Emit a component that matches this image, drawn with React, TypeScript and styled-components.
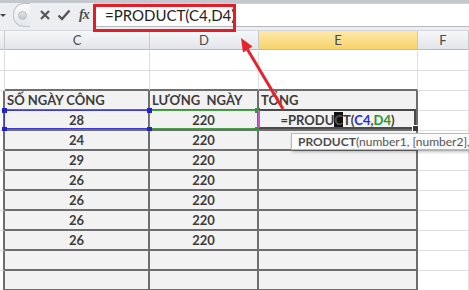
import React from "react";
import styled, { createGlobalStyle } from "styled-components";

const GlobalStyle = createGlobalStyle`
  html, body {
    margin: 0;
    padding: 0;
    background: #fff;
  }
  body {
    overflow: hidden;
    font-family: Lato, "Liberation Sans", sans-serif;
  }
`;

const Screen = styled.div`
  position: relative;
  width: 469px;
  height: 290px;
  overflow: hidden;
  background: #fff;
`;

/* formula bar */

const FormulaBar = styled.div`
  display: flex;
  height: 31px;
  box-sizing: border-box;
  border-top: 3px solid #c4c8ce;
  padding-bottom: 3px;
  background: #eceef1;
  border-bottom: 1px solid #d3d6da;
`;

const Tools = styled.div`
  width: 95px;
  display: flex;
  align-items: center;
  flex-shrink: 0;
`;

const Caret = styled.div`
  width: 0;
  height: 0;
  margin-left: 0;
  border-left: 3px solid transparent;
  border-right: 3px solid transparent;
  border-top: 3px solid #444;
  margin-right: 7px;
`;

const Pill = styled.div`
  width: 16px;
  height: 22px;
  border-radius: 11px 0 0 11px;
  border: 1px solid #c2c6cc;
  border-right: none;
  background: linear-gradient(#fbfbfc, #e4e7eb);
  display: flex;
  align-items: center;
  justify-content: center;
  margin-right: 8px;
`;

const Dot = styled.div`
  width: 7px;
  height: 7px;
  border-radius: 50%;
  background: linear-gradient(#e3e5e8, #c3c6cb);
  border: 1px solid #b8bcc1;
`;

const ToolIcon = styled.svg`
  width: 14px;
  height: 14px;
  margin-right: 5px;
  flex-shrink: 0;
`;

const Fx = styled.span`
  font-family: "Liberation Serif", serif;
  font-style: italic;
  font-weight: bold;
  font-size: 14px;
  color: #4d4d4d;
  margin-left: 3px;
  letter-spacing: -1px;
`;

const FormulaInput = styled.div`
  flex: 1;
  background: #fff;
  border-top: 1px solid #cfd3d8;
  border-bottom: 1px solid #b5bac1;
  display: flex;
  align-items: center;
  padding-left: 10px;
  font-size: 15px;
  color: #222;
`;

/* grid */

const Sheet = styled.div`
  display: grid;
  grid-template-columns: 5px 145px 109px 159px 1fr;
  grid-auto-rows: 20px;
`;

const ColumnHead = styled.div<{ $selected?: boolean }>`
  height: 19px;
  box-sizing: border-box;
  border-right: 1px solid #c6cacf;
  border-bottom: 1px solid #b8bcc2;
  background: ${({ $selected }) =>
    $selected
      ? "linear-gradient(#fde9ab, #f8d36b)"
      : "linear-gradient(#f6f7f9, #e2e5e9)"};
  display: flex;
  align-items: center;
  justify-content: center;
  font-size: 13px;
  color: #4a4a4a;
`;

type Tone = "plain" | "table" | "edge" | "tableEdge";

const Cell = styled.div<{ $tone: Tone; $align?: string; $topDark?: boolean }>`
  position: relative;
  box-sizing: border-box;
  display: flex;
  align-items: center;
  justify-content: ${({ $align }) => $align || "center"};
  padding-left: ${({ $align }) => ($align === "flex-start" ? "2px" : "0")};
  white-space: nowrap;
  font-size: 13px;
  font-weight: 700;
  color: #3c3c3c;
  background: ${({ $tone }) =>
    $tone === "table" ? "#f2f2f2" : "#fff"};
  border-bottom: ${({ $tone }) =>
    $tone === "table" ? "2px solid #6e6e6e" : "1px solid #dcdee0"};
  border-right: ${({ $tone }) =>
    $tone === "table" || $tone === "tableEdge"
      ? "2px solid #6e6e6e"
      : "1px solid #dcdee0"};
  ${({ $topDark }) => ($topDark ? "border-bottom: 2px solid #6e6e6e;" : "")}
`;

const Ring = styled.div<{ $color: string }>`
  position: absolute;
  inset: -1px -2px 0 -1px;
  border: 1px solid ${({ $color }) => $color};
  pointer-events: none;
`;

const Handle = styled.div<{ $color: string; $x: "l" | "r"; $y: "t" | "b" }>`
  position: absolute;
  width: 5px;
  height: 5px;
  background: ${({ $color }) => $color};
  ${({ $x }) => ($x === "l" ? "left: -3px;" : "right: -3px;")}
  ${({ $y }) => ($y === "t" ? "top: -3px;" : "bottom: -3px;")}
`;

const ActiveFrame = styled.div`
  position: absolute;
  inset: -2px 0 0 -1px;
  border: 2px solid #4a4a4a;
  border-left: 2px solid #c05ac8;
  pointer-events: none;
`;

const FillHandle = styled.div`
  position: absolute;
  right: -3px;
  bottom: -3px;
  width: 5px;
  height: 5px;
  background: #3a3a3a;
  border: 1px solid #fff;
`;

const RefC = styled.span`
  color: #2a2ad4;
`;

const RefD = styled.span`
  color: #2b9430;
`;

const Cursor = styled.span`
  background: #111;
  color: #555;
  display: inline-block;
  line-height: 17px;
`;

const Tooltip = styled.div`
  position: absolute;
  left: 291px;
  top: 133px;
  height: 17px;
  padding: 0 6px;
  box-sizing: border-box;
  background: #fbfbfb;
  border: 1px solid #b9b9b9;
  box-shadow: 1px 2px 3px rgba(0, 0, 0, 0.25);
  display: flex;
  align-items: center;
  white-space: nowrap;
  font-size: 12px;
  color: #555;
  b {
    font-weight: 700;
    color: #4d4d4d;
  }
`;

const RedBox = styled.div`
  position: absolute;
  left: 93px;
  top: 4px;
  width: 143px;
  height: 28px;
  box-sizing: border-box;
  border: 3px solid #e11d25;
  pointer-events: none;
`;

const Arrow = styled.svg`
  position: absolute;
  left: 0;
  top: 0;
  pointer-events: none;
`;

type Row =
  | { kind: "blank" }
  | { kind: "head" }
  | { kind: "data"; c?: string; d?: string; active?: boolean };

const rows: Row[] = [
  { kind: "blank" },
  { kind: "blank" },
  { kind: "head" },
  { kind: "data", c: "28", d: "220", active: true },
  { kind: "data", c: "24", d: "220" },
  { kind: "data", c: "29", d: "220" },
  { kind: "data", c: "26", d: "220" },
  { kind: "data", c: "26", d: "220" },
  { kind: "data", c: "26", d: "220" },
  { kind: "data", c: "26", d: "220" },
  { kind: "data" },
  { kind: "data" },
];

const Formula = () => (
  <>
    =PRODU<Cursor>C</Cursor>T(<RefC>C4</RefC>,<RefD>D4</RefD>)
  </>
);

const App = () => {
  return (
    <>
      <GlobalStyle />
      <Screen>
        <FormulaBar>
          <Tools>
            <Caret />
            <Pill>
              <Dot />
            </Pill>
            <ToolIcon viewBox="0 0 14 14">
              <path d="M3 3 L11 11 M11 3 L3 11" stroke="#555" strokeWidth="2.2" />
            </ToolIcon>
            <ToolIcon viewBox="0 0 14 14">
              <path d="M1.5 7.5 L5 11 L12.5 2.5" stroke="#555" strokeWidth="2.4" fill="none" />
            </ToolIcon>
            <Fx>fx</Fx>
          </Tools>
          <FormulaInput>=PRODUCT(C4,D4)</FormulaInput>
        </FormulaBar>

        <Sheet>
          <ColumnHead />
          <ColumnHead>C</ColumnHead>
          <ColumnHead>D</ColumnHead>
          <ColumnHead $selected>E</ColumnHead>
          <ColumnHead>F</ColumnHead>

          {rows.map((row, i) => {
            const before = rows[i + 1]?.kind === "head";
            if (row.kind === "blank") {
              return (
                <React.Fragment key={i}>
                  <Cell $tone="edge" />
                  <Cell $tone="plain" $topDark={before} />
                  <Cell $tone="plain" $topDark={before} />
                  <Cell $tone="plain" $topDark={before} />
                  <Cell $tone="plain" />
                </React.Fragment>
              );
            }
            if (row.kind === "head") {
              return (
                <React.Fragment key={i}>
                  <Cell $tone="tableEdge" />
                  <Cell $tone="table" $align="flex-start">SỐ NGÀY CÔNG</Cell>
                  <Cell $tone="table" $align="flex-start">LƯƠNG&nbsp; NGÀY</Cell>
                  <Cell $tone="table" $align="flex-start">TỔNG</Cell>
                  <Cell $tone="plain" />
                </React.Fragment>
              );
            }
            return (
              <React.Fragment key={i}>
                <Cell $tone="tableEdge" />
                <Cell $tone="table">
                  {row.c}
                  {row.active && (
                    <>
                      <Ring $color="#3b3bd0" />
                      <Handle $color="#2323c8" $x="l" $y="t" />
                      <Handle $color="#2323c8" $x="l" $y="b" />
                    </>
                  )}
                </Cell>
                <Cell $tone="table">
                  {row.d}
                  {row.active && (
                    <>
                      <Ring $color="#45a045" />
                      <Handle $color="#2323c8" $x="l" $y="t" />
                      <Handle $color="#2323c8" $x="l" $y="b" />
                      <Handle $color="#2f9a2f" $x="r" $y="t" />
                      <Handle $color="#2f9a2f" $x="r" $y="b" />
                    </>
                  )}
                </Cell>
                <Cell $tone="table">
                  {row.active && (
                    <>
                      <Formula />
                      <ActiveFrame />
                      <FillHandle />
                    </>
                  )}
                </Cell>
                <Cell $tone="plain" />
              </React.Fragment>
            );
          })}
        </Sheet>

        <Tooltip>
          <b>PRODUCT</b>(number1, [number2], ...)
        </Tooltip>

        <RedBox />

        <Arrow width="469" height="290" viewBox="0 0 469 290">
          <line x1="283" y1="109" x2="247.5" y2="49.5" stroke="#e5232b" strokeWidth="3" />
          <polygon points="241,38 252.5,46.5 243,52.5" fill="#e5232b" />
        </Arrow>
      </Screen>
    </>
  );
};

export default App;
